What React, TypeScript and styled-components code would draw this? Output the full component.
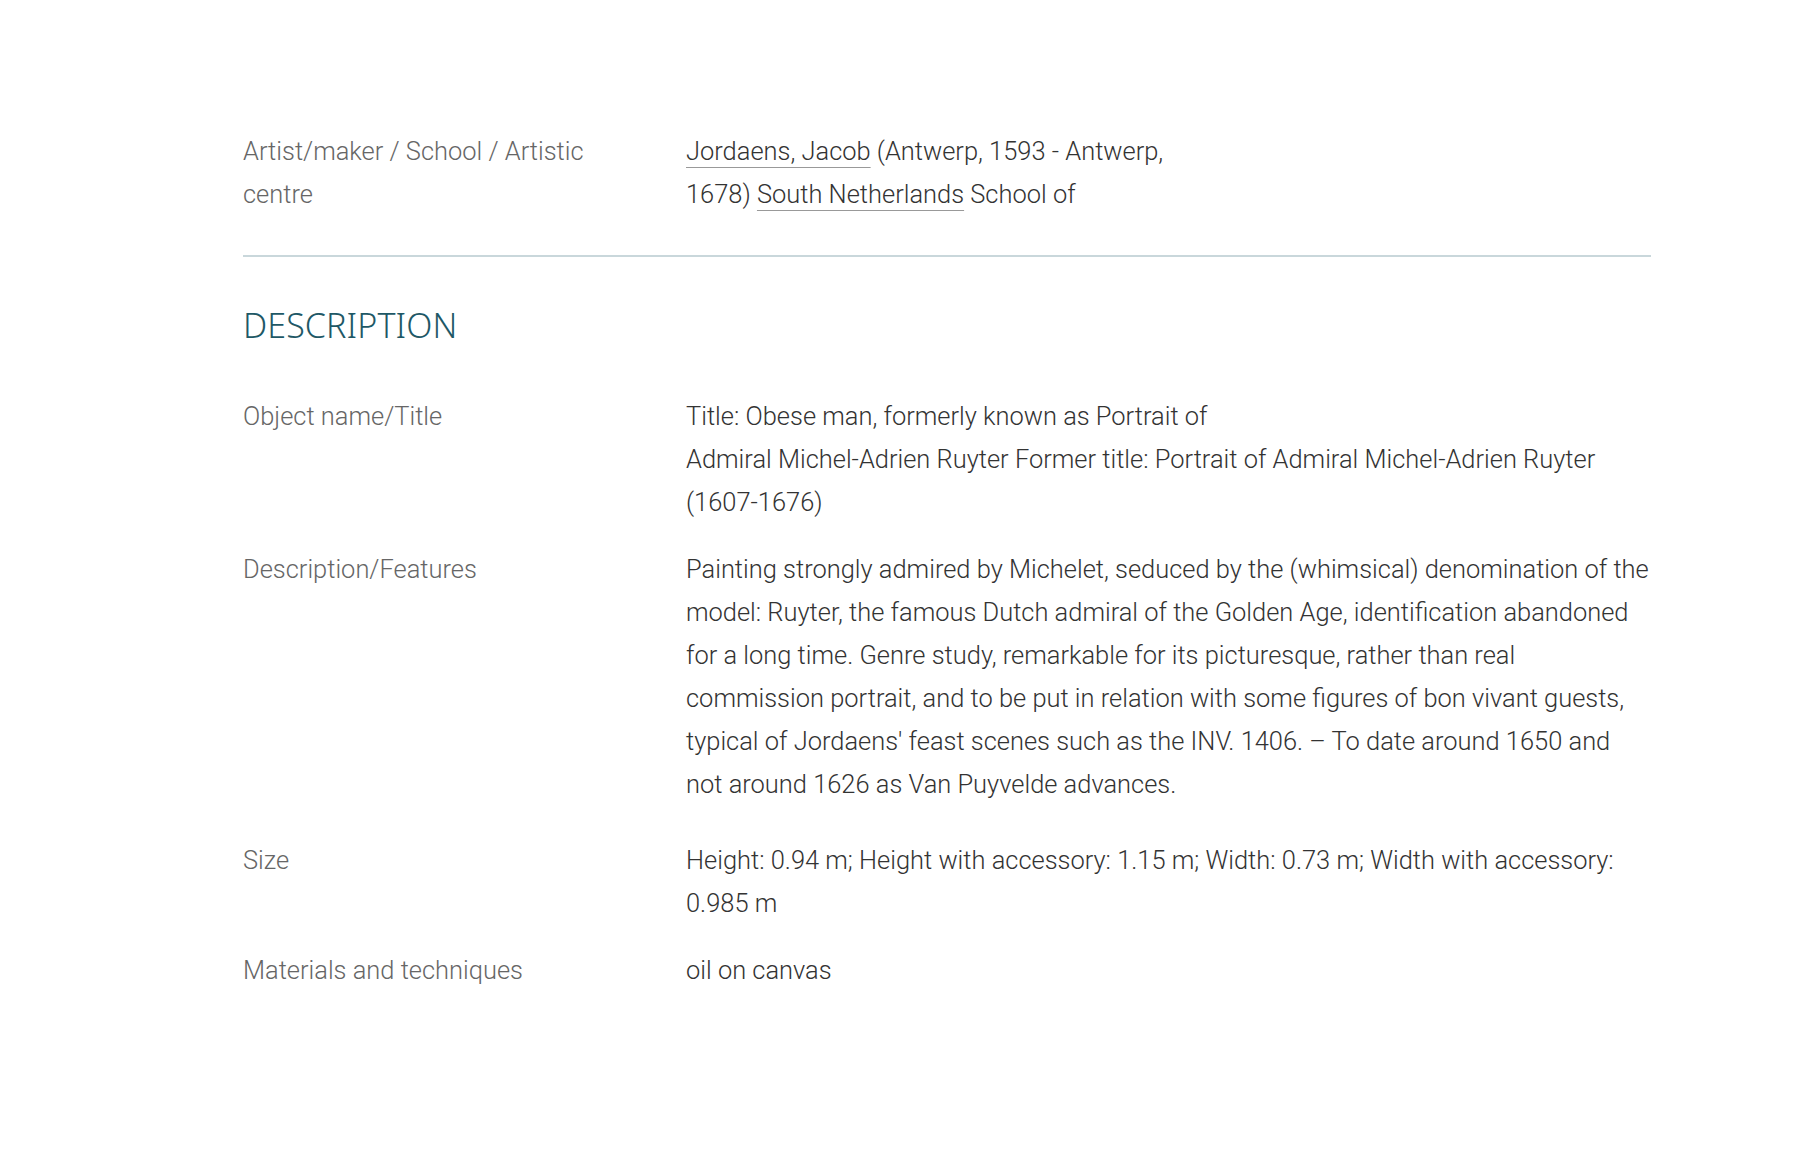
import styled, { createGlobalStyle } from "styled-components";

const GlobalStyle = createGlobalStyle`
  html, body {
    margin: 0;
    padding: 0;
    background: #ffffff;
  }
  body {
    font-family: Roboto, "Liberation Sans", sans-serif;
    -webkit-font-smoothing: antialiased;
  }
`

const Page = styled.main`
  width: 1408px;
  margin-left: 243px;
  padding-top: 130px;
  padding-bottom: 120px;
`

const Section = styled.section`
  display: flex;
  flex-direction: column;
`

const FieldRow = styled.div<{ $gap?: number }>`
  display: grid;
  grid-template-columns: 443px 1fr;
  margin-bottom: ${({ $gap }) => ($gap ?? 24)}px;
`

const Label = styled.div`
  font-weight: 300;
  font-size: 25.45px;
  line-height: 43px;
  color: #666666;
  max-width: 390px;
`

const Value = styled.div<{ $narrow?: boolean }>`
  font-weight: 300;
  font-size: 25.45px;
  line-height: 43px;
  color: #333333;
  max-width: ${({ $narrow }) => ($narrow ? '510px' : 'none')};
`

const Link = styled.a`
  color: inherit;
  text-decoration: underline;
  text-decoration-color: #999999;
  text-decoration-thickness: 1px;
  text-underline-offset: 7px;
`

const Divider = styled.hr`
  border: none;
  height: 2px;
  background: #c9d7db;
  margin: 39px 0 0;
`

const Heading = styled.h2`
  margin: 48px 0 50px;
  font-family: "Noto Sans", Lato, sans-serif;
  font-weight: 300;
  font-size: 34px;
  line-height: 40px;
  letter-spacing: 0.1px;
  color: #1e5866;
  text-transform: uppercase;
`

const fields = [
  {
    label: "Object name/Title",
    value: (
      <>
        Title: Obese man, formerly known as Portrait of
        <br />
        Admiral Michel-Adrien Ruyter Former title: Portrait of Admiral Michel-Adrien Ruyter (1607-1676)
      </>
    ),
  },
  {
    label: "Description/Features",
    value:
      "Painting strongly admired by Michelet, seduced by the (whimsical) denomination of the model: Ruyter, the famous Dutch admiral of the Golden Age, identification abandoned for a long time. Genre study, remarkable for its picturesque, rather than real commission portrait, and to be put in relation with some figures of bon vivant guests, typical of Jordaens' feast scenes such as the INV. 1406. \u2013 To date around 1650 and not around 1626 as Van Puyvelde advances.",
    gap: 33,
  },
  {
    label: "Size",
    value:
      "Height: 0.94 m; Height with accessory: 1.15 m; Width: 0.73 m; Width with accessory: 0.985 m",
  },
  {
    label: "Materials and techniques",
    value: "oil on canvas",
  },
];

export default function App() {
  return (
    <>
      <GlobalStyle />
      <Page>
        <Section>
          <FieldRow $gap={0}>
            <Label>Artist/maker / School / Artistic centre</Label>
            <Value $narrow>
              <Link href="#">Jordaens, Jacob</Link> (Antwerp, 1593 - Antwerp, 1678){" "}
              <Link href="#">South Netherlands</Link> School of
            </Value>
          </FieldRow>
          <Divider />
        </Section>
        <Section>
          <Heading>Description</Heading>
          {fields.map((f) => (
            <FieldRow key={f.label} $gap={f.gap}>
              <Label>{f.label}</Label>
              <Value>{f.value}</Value>
            </FieldRow>
          ))}
        </Section>
      </Page>
    </>
  );
}
